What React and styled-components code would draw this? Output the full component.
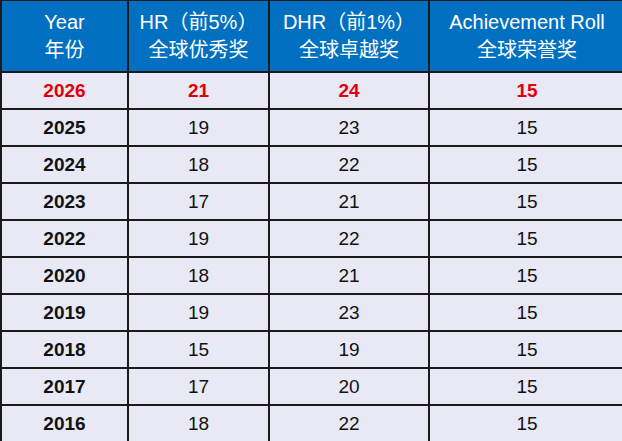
import React from 'react';
import styled, { createGlobalStyle } from 'styled-components';

const GlobalStyle = createGlobalStyle`
	html, body {
		margin: 0;
		padding: 0;
		overflow: hidden;
		background: #ffffff;
	}
`;

const rows = [
	{ year: '2026', hr: 21, dhr: 24, roll: 15, current: true },
	{ year: '2025', hr: 19, dhr: 23, roll: 15 },
	{ year: '2024', hr: 18, dhr: 22, roll: 15 },
	{ year: '2023', hr: 17, dhr: 21, roll: 15 },
	{ year: '2022', hr: 19, dhr: 22, roll: 15 },
	{ year: '2020', hr: 18, dhr: 21, roll: 15 },
	{ year: '2019', hr: 19, dhr: 23, roll: 15 },
	{ year: '2018', hr: 15, dhr: 19, roll: 15 },
	{ year: '2017', hr: 17, dhr: 20, roll: 15 },
	{ year: '2016', hr: 18, dhr: 22, roll: 15 },
];

const headers = [
	['Year', '年份'],
	['HR（前5%）', '全球优秀奖'],
	['DHR（前1%）', '全球卓越奖'],
	['Achievement Roll', '全球荣誉奖'],
];

export default function App() {
	return (
		<>
			<GlobalStyle />
			<Table>
				{headers.map(([en, zh]) => (
					<HeadCell key={en}>
						<span>{en}</span>
						<span>{zh}</span>
					</HeadCell>
				))}
				{rows.map((r) => (
					<React.Fragment key={r.year}>
						<Cell $red={r.current} $strong>
							{r.year}
						</Cell>
						<Cell $red={r.current} $strong={r.current}>
							{r.hr}
						</Cell>
						<Cell $red={r.current} $strong={r.current}>
							{r.dhr}
						</Cell>
						<Cell $red={r.current} $strong={r.current}>
							{r.roll}
						</Cell>
					</React.Fragment>
				))}
			</Table>
		</>
	);
}

const Table = styled.div`
	display: grid;
	grid-template-columns: 125px 139px 158px 194px;
	grid-template-rows: 70px repeat(10, 35px);
	gap: 2px;
	padding: 1px 2px 2px 2px;
	width: max-content;
	background: #1b1b1d;
	font-family: 'Liberation Sans', 'Noto Sans CJK SC', Arial, sans-serif;
`;

const HeadCell = styled.div`
	display: flex;
	flex-direction: column;
	align-items: center;
	justify-content: center;
	background: #0170c1;
	color: #ffffff;
	font-size: 20px;
	line-height: 28px;
	white-space: nowrap;
`;

const Cell = styled.div`
	display: flex;
	align-items: center;
	justify-content: center;
	background: #e8e9f5;
	color: ${(p) => (p.$red ? '#e0000c' : '#121212')};
	font-size: 19px;
	font-weight: ${(p) => (p.$strong ? 700 : 400)};
`;
